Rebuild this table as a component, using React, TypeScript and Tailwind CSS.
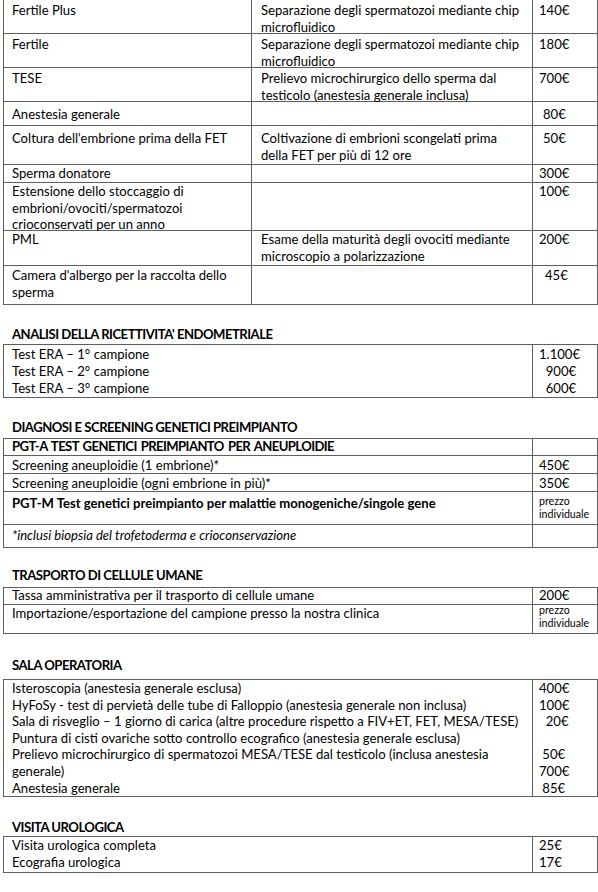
import React from "react";

const BC = "border-[#5e5e5e]";

type R1 = { h: string; pt: string; a: string[]; b: string[]; p: string; pl: string };

const t1: R1[] = [
  { h: "h-[34px]", pt: "pt-[2px]", a: ["Fertile Plus"], b: ["Separazione degli spermatozoi mediante chip", "microfluidico"], p: "140€", pl: "pl-[6px]" },
  { h: "h-[34px]", pt: "pt-[2px]", a: ["Fertile"], b: ["Separazione degli spermatozoi mediante chip", "microfluidico"], p: "180€", pl: "pl-[6px]" },
  { h: "h-[34px]", pt: "pt-[2px]", a: ["TESE"], b: ["Prelievo microchirurgico dello sperma dal", "testicolo (anestesia generale inclusa)"], p: "700€", pl: "pl-[6px]" },
  { h: "h-[24px]", pt: "pt-[4px]", a: ["Anestesia generale"], b: [], p: "80€", pl: "pl-[10px]" },
  { h: "h-[39px]", pt: "pt-[4px]", a: ["Coltura dell'embrione prima della FET"], b: ["Coltivazione di embrioni scongelati prima", "della FET per più di 12 ore"], p: "50€", pl: "pl-[10px]" },
  { h: "h-[18px]", pt: "pt-0", a: ["Sperma donatore"], b: [], p: "300€", pl: "pl-[6px]" },
  { h: "h-[48px]", pt: "pt-0", a: ["Estensione dello stoccaggio di", "embrioni/ovociti/spermatozoi", "crioconservati per un anno"], b: [], p: "100€", pl: "pl-[6px]" },
  { h: "h-[35px]", pt: "pt-0", a: ["PML"], b: ["Esame della maturità degli ovociti mediante", "microscopio a polarizzazione"], p: "200€", pl: "pl-[6px]" },
  { h: "h-[39px]", pt: "pt-[1px]", a: ["Camera d'albergo per la raccolta dello", "sperma"], b: [], p: "45€", pl: "pl-[12px]" },
];

function Lines({ lines }: { lines: string[] }) {
  return (
    <>
      {lines.map((l, i) => (
        <div key={i} className="whitespace-nowrap">
          {l}
        </div>
      ))}
    </>
  );
}

function Heading({ cls, children }: { cls: string; children: React.ReactNode }) {
  return <div className={`pl-[12px] font-bold leading-[16px] tracking-[-0.5px] whitespace-nowrap ${cls}`}>{children}</div>;
}

function Table1() {
  return (
    <div className={`ml-[3px] w-[595px] border-l ${BC}`}>
      {t1.map((r, i) => (
        <div key={i} className={`flex border-b ${BC} ${r.h}`}>
          <div className={`w-[248px] shrink-0 border-r ${BC} pl-[8px]`}>
            <div className={r.pt}>
              <Lines lines={r.a} />
            </div>
          </div>
          <div className={`w-[281px] shrink-0 border-r ${BC} pl-[9px]`}>
            <div className={r.pt}>
              <Lines lines={r.b} />
            </div>
          </div>
          <div className={`w-[65px] shrink-0 border-r ${BC} ${r.pl}`}>
            <div className={r.pt}>{r.p}</div>
          </div>
        </div>
      ))}
    </div>
  );
}

type Row = { h: string; pt: string; left: React.ReactNode; right: React.ReactNode; pl: string };

function Table({ rows }: { rows: Row[] }) {
  return (
    <div className={`ml-[3px] w-[595px] border-l border-t ${BC}`}>
      {rows.map((r, i) => (
        <div key={i} className={`flex border-b ${BC} ${r.h}`}>
          <div className={`w-[529px] shrink-0 border-r ${BC} pl-[8px]`}>
            <div className={r.pt}>{r.left}</div>
          </div>
          <div className={`w-[65px] shrink-0 border-r ${BC} ${r.pl}`}>
            <div className={r.pt}>{r.right}</div>
          </div>
        </div>
      ))}
    </div>
  );
}

function Small({ lines, cls }: { lines: string[]; cls: string }) {
  return (
    <div className={`text-[10.6px] leading-[13px] ${cls}`}>
      {lines.map((l, i) => (
        <div key={i}>{l}</div>
      ))}
    </div>
  );
}

export default function App() {
  return (
    <div className="w-[598px] h-[892px] bg-white text-black [font-family:Lato,'Noto_Sans',sans-serif] text-[13.1px] leading-[16.6px] overflow-hidden">
      <Table1 />

      <Heading cls="h-[39px] pt-[21px]">ANALISI DELLA RICETTIVITA' ENDOMETRIALE</Heading>
      <Table
        rows={[
          {
            h: "h-[53px]",
            pt: "pt-[1px] leading-[17px]",
            left: <Lines lines={["Test ERA – 1° campione", "Test ERA – 2° campione", "Test ERA – 3° campione"]} />,
            right: <Lines lines={["1.100€", "\u00a0\u00a0900€", "\u00a0\u00a0600€"]} />,
            pl: "pl-[6px]",
          },
        ]}
      />

      <Heading cls="h-[40px] pt-[21px]">DIAGNOSI E SCREENING GENETICI PREIMPIANTO</Heading>
      <Table
        rows={[
          {
            h: "h-[17px]",
            pt: "-mt-[1px] leading-[16px]",
            left: <div className="font-bold tracking-[-0.6px] [word-spacing:1.5px]">PGT-A TEST GENETICI PREIMPIANTO PER ANEUPLOIDIE</div>,
            right: null,
            pl: "pl-[6px]",
          },
          { h: "h-[18px]", pt: "pt-[1px] leading-[16px]", left: "Screening aneuploidie (1 embrione)*", right: "450€", pl: "pl-[6px]" },
          { h: "h-[18px]", pt: "pt-[1px] leading-[16px]", left: "Screening aneuploidie (ogni embrione in più)*", right: "350€", pl: "pl-[6px]" },
          {
            h: "h-[33px]",
            pt: "pt-[3px] leading-[16px]",
            left: <div className="font-bold">PGT-M Test genetici preimpianto per malattie monogeniche/singole gene</div>,
            right: <Small lines={["prezzo", "individuale"]} cls="pt-0" />,
            pl: "pl-[6px]",
          },
          { h: "h-[23px]", pt: "pt-[2px] leading-[16px]", left: <div className="italic">*inclusi biopsia del trofetoderma e crioconservazione</div>, right: null, pl: "pl-[6px]" },
        ]}
      />

      <Heading cls="h-[39px] pt-[19px]">TRASPORTO DI CELLULE UMANE</Heading>
      <Table
        rows={[
          { h: "h-[17px]", pt: "-mt-[1px] leading-[16px]", left: "Tassa amministrativa per il trasporto di cellule umane", right: "200€", pl: "pl-[6px]" },
          {
            h: "h-[29px]",
            pt: "pt-0 leading-[16px]",
            left: "Importazione/esportazione del campione presso la nostra clinica",
            right: <Small lines={["prezzo", "individuale"]} cls="-mt-[1px]" />,
            pl: "pl-[6px]",
          },
        ]}
      />

      <Heading cls="h-[45px] pt-[23px]">SALA OPERATORIA</Heading>
      <Table
        rows={[
          {
            h: "h-[117px]",
            pt: "pt-0 leading-[16.6px]",
            left: (
              <Lines
                lines={[
                  "Isteroscopia (anestesia generale esclusa)",
                  "HyFoSy - test di pervietà delle tube di Falloppio (anestesia generale non inclusa)",
                  "Sala di risveglio – 1 giorno di carica (altre procedure rispetto a FIV+ET, FET, MESA/TESE)",
                  "Puntura di cisti ovariche sotto controllo ecografico (anestesia generale esclusa)",
                  "Prelievo microchirurgico di spermatozoi MESA/TESE dal testicolo (inclusa anestesia",
                  "generale)",
                  "Anestesia generale",
                ]}
              />
            ),
            right: <Lines lines={["400€", "100€", "\u00a0\u00a020€", "\u00a0", "\u00a050€", "700€", "\u00a085€"]} />,
            pl: "pl-[6px]",
          },
        ]}
      />

      <Heading cls="h-[39px] pt-[22px]">VISITA UROLOGICA</Heading>
      <Table
        rows={[
          {
            h: "h-[36px]",
            pt: "pt-0 leading-[17px]",
            left: <Lines lines={["Visita urologica completa", "Ecografia urologica"]} />,
            right: <Lines lines={["25€", "17€"]} />,
            pl: "pl-[6px]",
          },
        ]}
      />
    </div>
  );
}
